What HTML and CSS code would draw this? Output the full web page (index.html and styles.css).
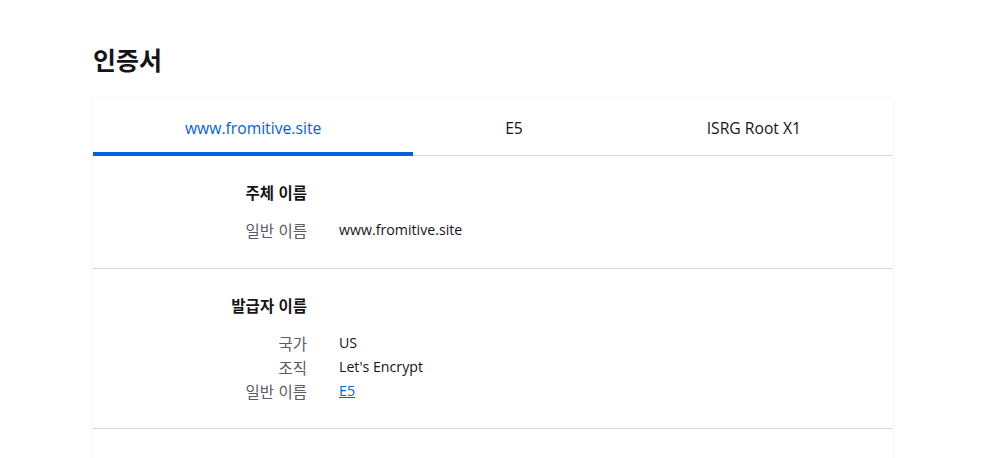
FILE: index.html
```html
<!DOCTYPE html>
<html lang="ko">
<head>
<meta charset="utf-8">
<title>인증서</title>
<link rel="stylesheet" href="styles.css">
</head>
<body>
<main class="page">
  <h1 class="title">인증서</h1>
  <section class="card">
    <nav class="tabs">
      <div class="tab active">www.fromitive.site</div>
      <div class="tab">E5</div>
      <div class="tab">ISRG Root X1</div>
    </nav>
    <div class="section">
      <div class="row heading"><span class="label">주체 이름</span></div>
      <div class="rows">
        <div class="row"><span class="label">일반 이름</span><span class="value">www.fromitive.site</span></div>
      </div>
    </div>
    <div class="section issuer">
      <div class="row heading"><span class="label">발급자 이름</span></div>
      <div class="rows">
        <div class="row"><span class="label">국가</span><span class="value">US</span></div>
        <div class="row"><span class="label">조직</span><span class="value">Let's Encrypt</span></div>
        <div class="row"><span class="label">일반 이름</span><span class="value"><a class="link" href="#">E5</a></span></div>
      </div>
    </div>
    <div class="section empty"></div>
  </section>
</main>
</body>
</html>
```
FILE: styles.css
```css
* { box-sizing: border-box; }
html, body { margin: 0; padding: 0; background: #ffffff; }
body {
  font-family: "Open Sans", "Noto Sans CJK KR", sans-serif;
  color: #15141a;
  font-size: 14.2px;
}
.page {
  width: 800px;
  margin-left: 93px;
  padding-top: 40px;
}
.title {
  font-family: "Noto Sans CJK KR", sans-serif;
  font-size: 25px;
  font-weight: 700;
  line-height: 38px;
  margin: 0 0 20px 0;
}
.card {
  background: #fff;
  box-shadow: 0 0 3px rgba(12, 12, 13, 0.08);
}
.tabs {
  display: flex;
  border-bottom: 1px solid #d7d7db;
}
.tab {
  flex: 1 1 auto;
  text-align: center;
  font-size: 15.7px;
  line-height: 24px;
  padding: 18px 0 12px;
  border-bottom: 4px solid transparent;
  margin-bottom: -1px;
}
.tab.active {
  color: #0061e0;
  border-bottom-color: #0061e0;
}
.section {
  padding: 24px 0 26px;
  border-bottom: 1px solid #d7d7db;
}
.section.issuer { padding-bottom: 25px; }
.section.empty { border-bottom: none; height: 30px; }
.row {
  display: grid;
  grid-template-columns: 214px 1fr;
  column-gap: 32px;
  line-height: 24px;
}
.heading { margin-bottom: 14px; }
.heading .label {
  color: #15141a;
  font-weight: 700;
}
.label {
  text-align: right;
  color: #5b5b66;
  font-family: "Noto Sans CJK KR", sans-serif;
  font-size: 15.5px;
}
.value { color: #15141a; }
.link { color: #0061e0; text-decoration: underline; }
```
